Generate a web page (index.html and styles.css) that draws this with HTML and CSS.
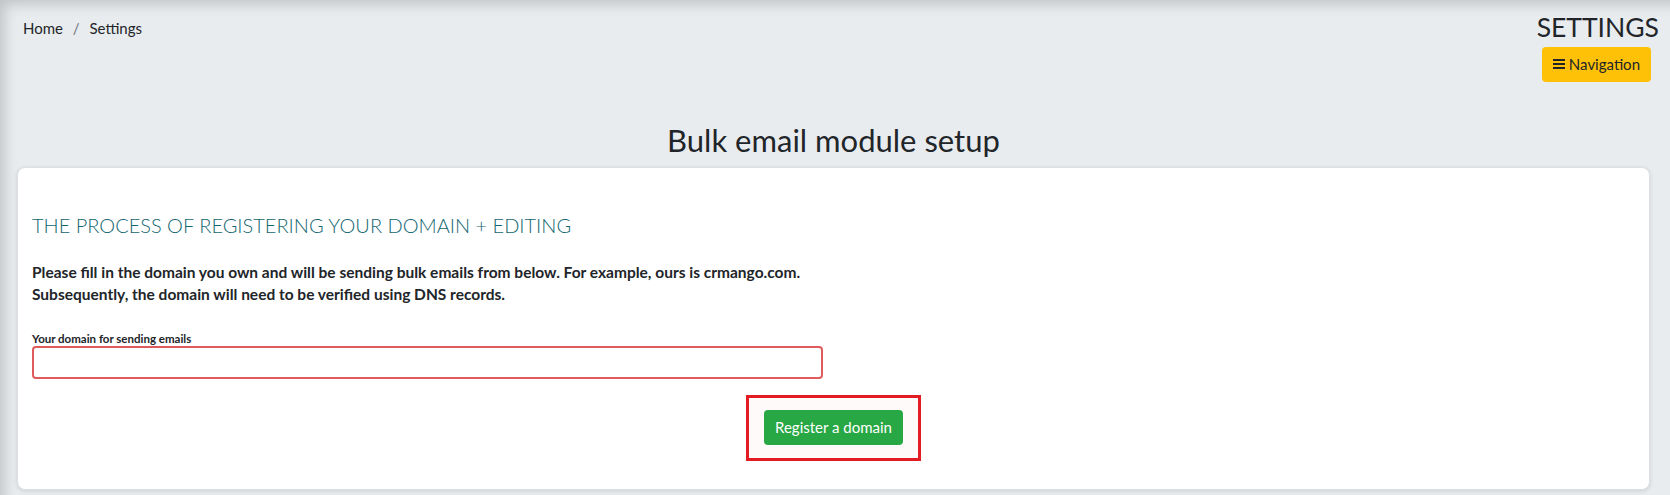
FILE: index.html
```html
<!DOCTYPE html>
<html lang="en">

<head>
    <meta charset="UTF-8">
    <meta name="viewport" content="width=device-width, initial-scale=1.0">
    <title>Settings - Bulk email module setup</title>
    <link rel="stylesheet" href="styles.css">
</head>

<body>
    <div class="page">
        <!-- Top bar: breadcrumb and page name -->
        <div class="topBar">
            <nav class="breadcrumb">
                <a href="#">Home</a>
                <span class="sep">/</span>
                <span class="current">Settings</span>
            </nav>
            <div class="pageName">
                <h1>SETTINGS</h1>
                <button class="btnNav" type="button">
                    <svg class="bars" viewBox="0 0 12 10" width="12" height="10">
                        <rect x="0" y="0" width="12" height="2" />
                        <rect x="0" y="4" width="12" height="2" />
                        <rect x="0" y="8" width="12" height="2" />
                    </svg>
                    Navigation
                </button>
            </div>
        </div>

        <h2 class="pageTitle">Bulk email module setup</h2>

        <div class="card">
            <h3 class="cardTitle">THE PROCESS OF REGISTERING YOUR DOMAIN + EDITING</h3>
            <p class="intro">
                Please fill in the domain you own and will be sending bulk emails from below. For example, ours is crmango.com.
                <br>
                Subsequently, the domain will need to be verified using DNS records.
            </p>

            <form id="domainForm">
                <label for="domain">Your domain for sending emails</label>
                <input type="text" id="domain" class="textBox">
                <div class="actions">
                    <div class="highlight">
                        <button class="btnGreen" type="submit">Register a domain</button>
                    </div>
                </div>
            </form>
        </div>
    </div>
</body>

</html>
```

FILE: styles.css
```css
html,
body {
    margin: 0;
    height: 100%;
}

body {
    background-color: #e9ecef;
    font-family: Lato, "Open Sans", sans-serif;
    color: #212529;
}

.page {
    min-height: 100%;
    box-sizing: border-box;
    padding: 0 20px 5px 17px;
    box-shadow: inset 10px 10px 14px -6px rgba(0, 0, 0, 0.18);
}

.topBar {
    display: flex;
    justify-content: space-between;
    align-items: flex-start;
}

.breadcrumb {
    padding: 19px 0 0 6px;
    font-size: 15px;
}

.breadcrumb a {
    color: #212529;
    text-decoration: none;
}

.breadcrumb .sep {
    color: #6c757d;
    padding: 0 6px;
}

.pageName {
    display: flex;
    flex-direction: column;
    align-items: flex-end;
    padding-top: 12px;
}

.pageName h1 {
    margin: 0 -9px 3px 0;
    font-size: 26.5px;
    font-weight: 400;
    line-height: 1.2;
}

.btnNav {
    display: flex;
    align-items: center;
    gap: 4px;
    height: 35px;
    padding: 0 11px;
    margin-right: -1px;
    border: none;
    border-radius: 4px;
    background-color: #ffc107;
    color: #212529;
    font-family: inherit;
    font-size: 15px;
}

.bars {
    fill: #212529;
}

.pageTitle {
    margin: 40px 0 8px;
    text-align: center;
    font-size: 31px;
    font-weight: 400;
    line-height: 1.2;
}

.card {
    background-color: #fff;
    border: 1px solid #dcdfe3;
    border-radius: 8px;
    box-shadow: 0 1px 4px rgba(0, 0, 0, 0.12);
    padding: 45px 14px 28px;
}

.cardTitle {
    margin: 0 0 24px;
    color: #13666f;
    font-size: 20px;
    font-weight: 300;
}

.intro {
    margin: 0 0 27px;
    font-size: 15.5px;
    font-weight: 700;
    line-height: 22px;
}

#domainForm label {
    display: block;
    font-size: 11.5px;
    font-weight: 700;
    margin-bottom: 1px;
}

.textBox {
    display: block;
    box-sizing: border-box;
    width: 791px;
    height: 33px;
    border: 2px solid #e05c5c;
    border-radius: 4px;
    padding: 4px 10px;
    font-family: inherit;
    font-size: 15px;
}

.actions {
    display: flex;
    justify-content: center;
    margin-top: 16px;
}

.highlight {
    border: 3px solid #e31b23;
    background-color: #fffafa;
    padding: 12px 15px 13px;
}

.btnGreen {
    height: 35px;
    padding: 0 11px;
    border: none;
    border-radius: 4px;
    background-color: #28a745;
    color: #fff;
    font-family: inherit;
    font-size: 15px;
    cursor: pointer;
}
```
